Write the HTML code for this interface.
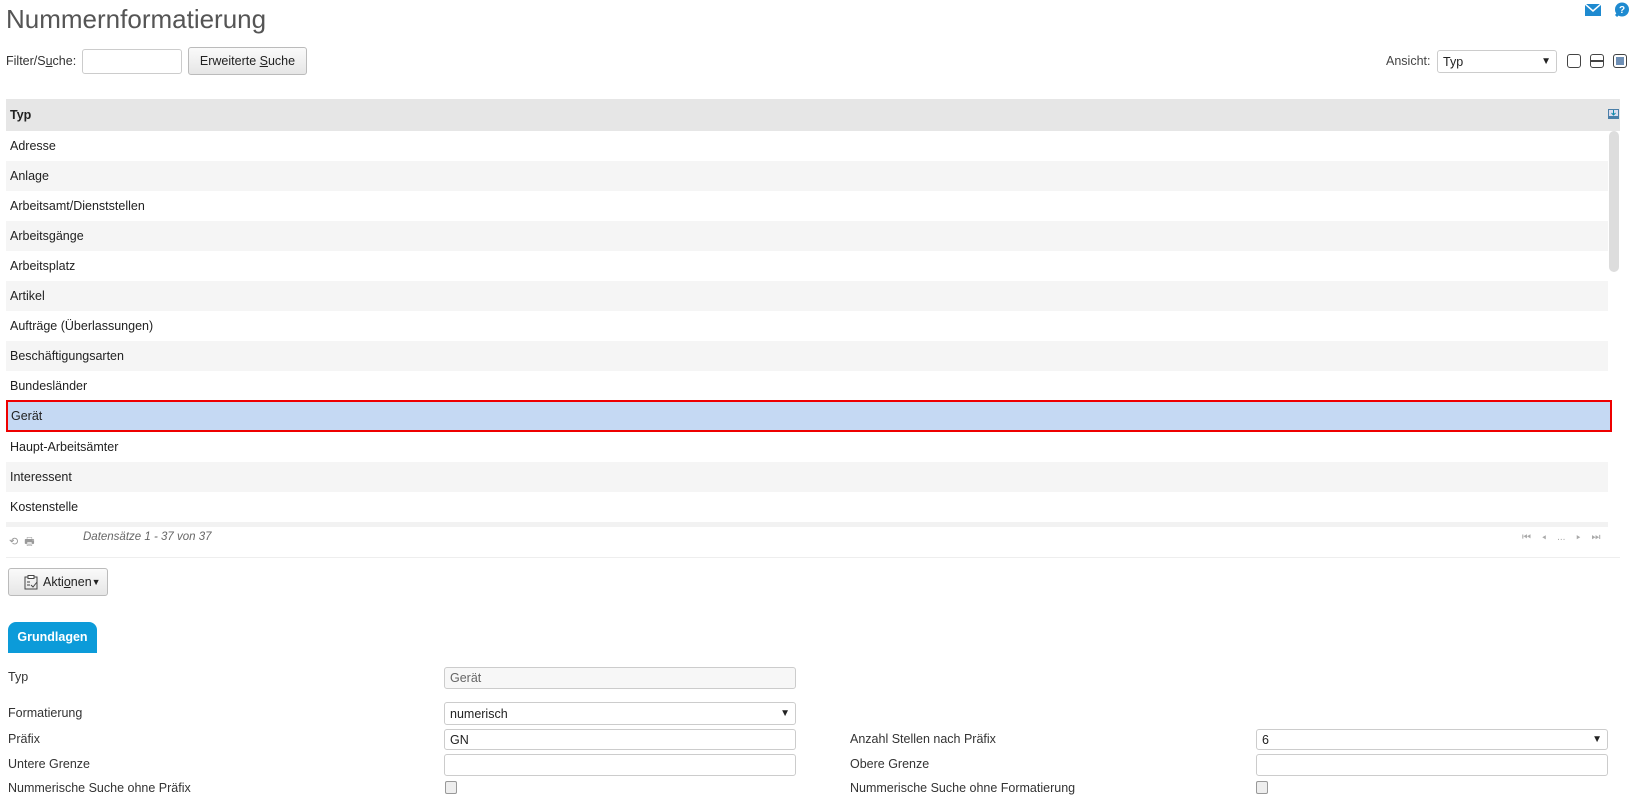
<!DOCTYPE html>
<html><head><meta charset="utf-8"><style>
*{box-sizing:border-box;margin:0;padding:0}
body{width:1634px;height:802px;overflow:hidden;background:#fff;font-family:"Liberation Sans",Arial,sans-serif;font-size:12.5px;color:#222;position:relative}
.a{position:absolute}
h1{position:absolute;left:6px;top:4px;font-size:26px;font-weight:normal;color:#555}
.inp{position:absolute;border:1px solid #ccc;border-radius:3px;background:#fff;padding:0 5px;display:flex;align-items:center}
.btn{position:absolute;border:1px solid #bbb;border-radius:3px;background:linear-gradient(#fafafa,#e6e6e6);text-align:center}
.row{position:absolute;left:6px;width:1602px;height:30px;padding-left:4px;line-height:30px}
.lbl{position:absolute;left:8px;color:#333}
.cb{position:absolute;width:12px;height:13px;border:1px solid #999;border-radius:2px;background:#eee}
.vb{position:absolute;top:54px;width:14px;height:14px;border:1px solid #444;border-radius:3px}
</style></head><body>
<h1>Nummernformatierung</h1>
<svg class="a" style="left:1585px;top:4px" width="16" height="12"><rect width="16" height="12" fill="#1e8ad0"/><path d="M0 0 L8 7 L16 0" stroke="#fff" stroke-width="1.5" fill="none"/></svg>
<svg class="a" style="left:1614px;top:2px" width="16" height="16"><circle cx="8" cy="7.5" r="7" fill="#1e8ad0"/><path d="M2 14 L5 11" stroke="#1e8ad0" stroke-width="3"/><text x="8" y="11" font-size="10" fill="#fff" text-anchor="middle" font-weight="bold" font-family="Liberation Sans">?</text></svg>

<div class="a" style="left:6px;top:54px;color:#333">Filter/S<u>u</u>che:</div>
<div class="inp" style="left:82px;top:49px;width:100px;height:25px"></div>
<div class="btn" style="left:188px;top:47px;width:119px;height:28px;line-height:26px">Erweiterte&nbsp;<u>S</u>uche</div>

<div class="a" style="left:1386px;top:54px;color:#444">Ansicht:</div>
<div class="inp" style="left:1437px;top:50px;width:120px;height:23px">Typ<span style="margin-left:auto;font-size:10px">▼</span></div>
<div class="vb" style="left:1567px"></div>
<div class="vb" style="left:1590px;background:linear-gradient(#fff 5px,#444 5px,#444 7px,#fff 7px)"></div>
<div class="vb" style="left:1613px;background:#6e8fb5;box-shadow:inset 0 0 0 2px #fff"></div>

<div class="a" style="left:6px;top:99px;width:1614px;height:32px;background:#e6e6e6"></div>
<div class="a" style="left:10px;top:108px;font-weight:bold">Typ</div>
<svg class="a" style="left:1608px;top:109px" width="11" height="10"><rect width="11" height="10" fill="#4a7fa8"/><rect x="1" y="1" width="9" height="6" fill="#dde"/><path d="M5.5 1v5M3.5 4l2 2 2-2" stroke="#18a" fill="none"/></svg>
<div class="a" style="left:1609px;top:131px;width:10px;height:141px;background:#ddd;border-radius:5px"></div>

<div class="a" style="left:0;top:131px">
<div class="row" style="top:0">Adresse</div>
<div class="row" style="top:30px;background:#f5f5f5">Anlage</div>
<div class="row" style="top:60px">Arbeitsamt/Dienststellen</div>
<div class="row" style="top:90px;background:#f5f5f5">Arbeitsgänge</div>
<div class="row" style="top:120px">Arbeitsplatz</div>
<div class="row" style="top:150px;background:#f5f5f5">Artikel</div>
<div class="row" style="top:180px">Aufträge (Überlassungen)</div>
<div class="row" style="top:210px;background:#f5f5f5">Beschäftigungsarten</div>
<div class="row" style="top:240px">Bundesländer</div>
<div class="row" style="top:269px;height:32px;line-height:28px;background:#c5d9f3;border:2px solid #e00;width:1606px;padding-left:3px">Gerät</div>
<div class="row" style="top:301px">Haupt-Arbeitsämter</div>
<div class="row" style="top:331px;background:#f5f5f5">Interessent</div>
<div class="row" style="top:361px">Kostenstelle</div>
<div class="row" style="top:391px;height:5px;background:#f2f2f2"></div>
</div>

<div class="a" style="left:9px;top:533px;color:#999;font-size:11px;letter-spacing:6px">⟲🖶</div>
<div class="a" style="left:83px;top:531px;color:#666;font-style:italic;font-size:11.5px">Datensätze 1 - 37 von 37</div>
<div class="a" style="left:1522px;top:532px;color:#aaa;font-size:10px;word-spacing:8px">⏮ ◂ ... ▸ ⏭</div>
<div class="a" style="left:6px;top:557px;width:1614px;height:1px;background:#eee"></div>

<div class="btn" style="left:8px;top:568px;width:100px;height:28px;display:flex;align-items:center;padding-left:15px">
<svg width="14" height="15" style="margin-right:5px"><rect x="1" y="2" width="12" height="12" fill="none" stroke="#444"/><rect x="4" y="0.5" width="6" height="3" fill="#fff" stroke="#444"/><path d="M3 7h3M3 10h3M7 10l2 2 4-5" stroke="#444" fill="none"/></svg>Akti<u>o</u>nen<span style="font-size:9px">▼</span></div>

<div class="a" style="left:8px;top:622px;width:89px;height:31px;background:#0c9bd9;border-radius:8px 8px 0 0;color:#fff;font-weight:bold;font-size:12.5px;text-align:center;line-height:31px">Grundlagen</div>

<div class="lbl" style="top:670px">Typ</div>
<div class="inp" style="left:444px;top:667px;width:352px;height:22px;background:#f7f7f7;color:#666">Gerät</div>
<div class="lbl" style="top:706px">Formatierung</div>
<div class="inp" style="left:444px;top:702px;width:352px;height:23px">numerisch<span style="margin-left:auto;font-size:10px">▼</span></div>
<div class="lbl" style="top:732px">Präfix</div>
<div class="inp" style="left:444px;top:729px;width:352px;height:21px">GN</div>
<div class="lbl" style="top:757px">Untere Grenze</div>
<div class="inp" style="left:444px;top:754px;width:352px;height:22px"></div>
<div class="lbl" style="top:781px">Nummerische Suche ohne Präfix</div>
<div class="cb" style="left:445px;top:781px"></div>

<div class="a" style="left:850px;top:732px;color:#333">Anzahl Stellen nach Präfix</div>
<div class="inp" style="left:1256px;top:729px;width:352px;height:21px">6<span style="margin-left:auto;font-size:10px">▼</span></div>
<div class="a" style="left:850px;top:757px;color:#333">Obere Grenze</div>
<div class="inp" style="left:1256px;top:754px;width:352px;height:22px"></div>
<div class="a" style="left:850px;top:781px;color:#333">Nummerische Suche ohne Formatierung</div>
<div class="cb" style="left:1256px;top:781px"></div>
</body></html>
